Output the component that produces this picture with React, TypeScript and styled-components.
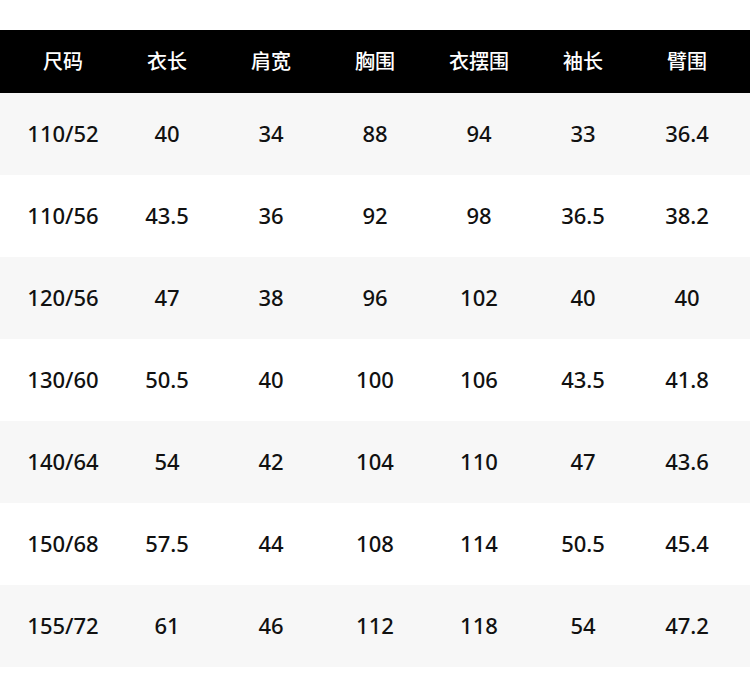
import React from 'react'
import styled, { createGlobalStyle } from 'styled-components'

const GlobalStyle = createGlobalStyle`
  body {
    margin: 0;
    background: #fff;
    font-family: "Noto Sans", "Noto Sans CJK SC", sans-serif;
  }
`

const Page = styled.div`
  width: 750px;
  padding-top: 30px;
  padding-bottom: 20px;
`

const Row = styled.div<{ $bg: string; $h: number }>`
  display: grid;
  grid-template-columns: repeat(7, 104px);
  padding: 0 11px 3px;
  height: ${({ $h }) => $h - 3}px;
  align-items: center;
  background: ${({ $bg }) => $bg};
`

const HeadCell = styled.div`
  text-align: center;
  color: #fff;
  font-size: 20px;
  font-family: "Noto Sans CJK SC", sans-serif;
  font-weight: 500;
`

const Cell = styled.div`
  text-align: center;
  color: #111;
  font-size: 22px;
  font-weight: 500;
`

const headers = ['尺码', '衣长', '肩宽', '胸围', '衣摆围', '袖长', '臂围']

const rows = [
  ['110/52', '40', '34', '88', '94', '33', '36.4'],
  ['110/56', '43.5', '36', '92', '98', '36.5', '38.2'],
  ['120/56', '47', '38', '96', '102', '40', '40'],
  ['130/60', '50.5', '40', '100', '106', '43.5', '41.8'],
  ['140/64', '54', '42', '104', '110', '47', '43.6'],
  ['150/68', '57.5', '44', '108', '114', '50.5', '45.4'],
  ['155/72', '61', '46', '112', '118', '54', '47.2'],
]

const App = () => (
  <>
    <GlobalStyle />
    <Page>
      <Row $bg="#000" $h={63}>
        {headers.map((h) => (
          <HeadCell key={h}>{h}</HeadCell>
        ))}
      </Row>
      {rows.map((r, i) => (
        <Row key={r[0]} $bg={i % 2 === 0 ? '#f7f7f7' : '#fff'} $h={82}>
          {r.map((v, j) => (
            <Cell key={j}>{v}</Cell>
          ))}
        </Row>
      ))}
    </Page>
  </>
)

export default App
